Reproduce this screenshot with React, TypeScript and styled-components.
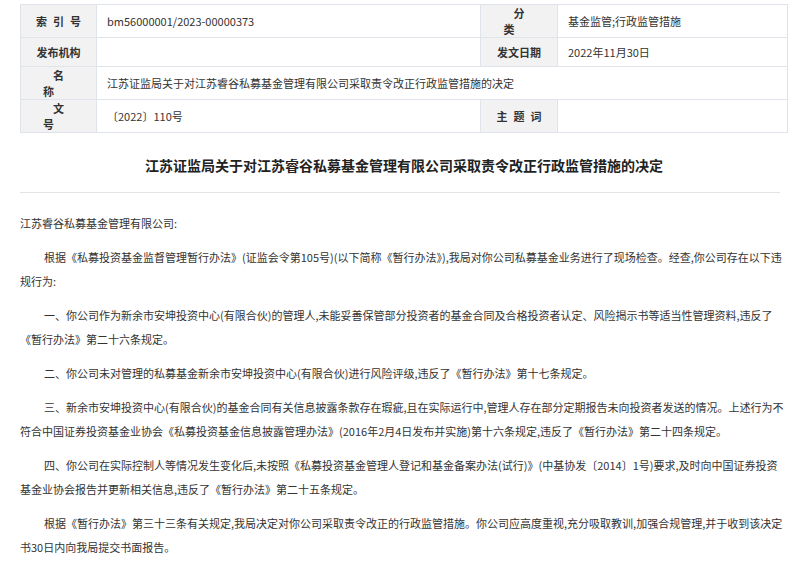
import React from 'react';
import styled, { createGlobalStyle } from 'styled-components';

const GlobalStyle = createGlobalStyle`
  body {
    margin: 0;
    background: #fff;
    font-family: "Noto Sans CJK SC", "Noto Sans", sans-serif;
    color: #333;
  }
`;

const Page = styled.div`
  width: 800px;
  height: 567px;
  overflow: hidden;
  padding: 4px 12px 0 20px;
  box-sizing: border-box;
`;

const Table = styled.table`
  width: 768px;
  border-collapse: collapse;
  font-size: 11px;
  table-layout: fixed;
`;

const Label = styled.td<{ $spread?: number }>`
  height: 28px;
  padding: 0;
  background: #f2f2f2;
  border: 1px solid #dfe4ea;
  text-align: center;
  font-weight: bold;
  color: #333;
  letter-spacing: ${p => p.$spread ?? 0}px;
  text-indent: ${p => p.$spread ?? 0}px;
`;

const Value = styled.td`
  border: 1px solid #dfe4ea;
  padding: 0 10px;
  color: #333;
`;

const Title = styled.h1`
  margin: 20px 0 0;
  text-align: center;
  font-size: 14px;
  font-weight: bold;
  color: #222;
  line-height: 24px;
`;

const Divider = styled.hr`
  border: none;
  border-top: 1px solid #e3e3e3;
  margin: 15px 0 0;
  width: 760px;
`;

const Body = styled.div`
  margin-top: 18px;
  font-size: 11px;
  line-height: 24px;
  color: #333;
`;

const Para = styled.p`
  margin: 0 0 10px;
`;

const Line = styled.span<{ $indent?: boolean }>`
  display: block;
  white-space: nowrap;
  padding-left: ${p => (p.$indent ? '24px' : '0')};
`;

const paras: string[][] = [
  ['根据《私募投资基金监督管理暂行办法》(证监会令第105号)(以下简称《暂行办法》),我局对你公司私募基金业务进行了现场检查。经查,你公司存在以下违', '规行为:'],
  ['一、你公司作为新余市安坤投资中心(有限合伙)的管理人,未能妥善保管部分投资者的基金合同及合格投资者认定、风险揭示书等适当性管理资料,违反了', '《暂行办法》第二十六条规定。'],
  ['二、你公司未对管理的私募基金新余市安坤投资中心(有限合伙)进行风险评级,违反了《暂行办法》第十七条规定。'],
  ['三、新余市安坤投资中心(有限合伙)的基金合同有关信息披露条款存在瑕疵,且在实际运行中,管理人存在部分定期报告未向投资者发送的情况。上述行为不', '符合中国证券投资基金业协会《私募投资基金信息披露管理办法》(2016年2月4日发布并实施)第十六条规定,违反了《暂行办法》第二十四条规定。'],
  ['四、你公司在实际控制人等情况发生变化后,未按照《私募投资基金管理人登记和基金备案办法(试行)》(中基协发〔2014〕1号)要求,及时向中国证券投资', '基金业协会报告并更新相关信息,违反了《暂行办法》第二十五条规定。'],
  ['根据《暂行办法》第三十三条有关规定,我局决定对你公司采取责令改正的行政监管措施。你公司应高度重视,充分吸取教训,加强合规管理,并于收到该决定', '书30日内向我局提交书面报告。'],
];

export default function App() {
  return (
    <Page>
      <GlobalStyle />
      <Table>
        <colgroup>
          <col style={{ width: 76 }} />
          <col style={{ width: 384 }} />
          <col style={{ width: 77 }} />
          <col />
        </colgroup>
        <tbody>
          <tr>
            <Label $spread={6}>索引号</Label>
            <Value>bm56000001/2023-00000373</Value>
            <Label $spread={20}>分类</Label>
            <Value>基金监管;行政监管措施</Value>
          </tr>
          <tr>
            <Label>发布机构</Label>
            <Value />
            <Label>发文日期</Label>
            <Value>2022年11月30日</Value>
          </tr>
          <tr>
            <Label $spread={20}>名称</Label>
            <Value colSpan={3}>江苏证监局关于对江苏睿谷私募基金管理有限公司采取责令改正行政监管措施的决定</Value>
          </tr>
          <tr>
            <Label $spread={20}>文号</Label>
            <Value>〔2022〕110号</Value>
            <Label $spread={6}>主题词</Label>
            <Value />
          </tr>
        </tbody>
      </Table>
      <Title>江苏证监局关于对江苏睿谷私募基金管理有限公司采取责令改正行政监管措施的决定</Title>
      <Divider />
      <Body>
        <Para>江苏睿谷私募基金管理有限公司:</Para>
        {paras.map((lines, i) => (
          <Para key={i}>
            {lines.map((l, j) => (
              <Line key={j} $indent={j === 0}>{l}</Line>
            ))}
          </Para>
        ))}
      </Body>
    </Page>
  );
}
